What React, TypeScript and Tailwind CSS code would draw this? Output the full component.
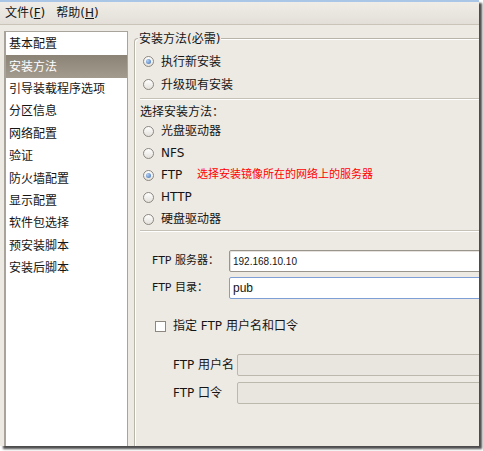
import type { ReactNode } from 'react';

const navItems = [
  '基本配置',
  '安装方法',
  '引导装载程序选项',
  '分区信息',
  '网络配置',
  '验证',
  '防火墙配置',
  '显示配置',
  '软件包选择',
  '预安装脚本',
  '安装后脚本',
];

function Radio({ checked }: { checked?: boolean }) {
  return (
    <span className="flex h-[11px] w-[11px] shrink-0 items-center justify-center rounded-full border border-[#8c877f] bg-linear-to-b from-white to-[#e4e1dc]">
      {checked && (
        <span className="h-[5px] w-[5px] rounded-full bg-[radial-gradient(circle_at_35%_35%,#b5d1f3,#3a6db5)]" />
      )}
    </span>
  );
}

function RadioRow({ checked, children, h = 'h-[22px]' }: { checked?: boolean; children: ReactNode; h?: string }) {
  return (
    <div className={`flex ${h} items-center gap-[7px] pl-[8px]`}>
      <Radio checked={checked} />
      {children}
    </div>
  );
}

function Separator() {
  return <div className="ml-[5px] border-t border-[#c6c1b7] shadow-[0_1px_0_#ffffff]" />;
}

export default function App() {
  return (
    <div className="h-[451px] w-[483px] overflow-hidden bg-white font-['DejaVu_Sans','Noto_Sans_CJK_SC',sans-serif] text-[12px] text-[#151515]">
      <div className="flex h-[446px] w-[479px] flex-col bg-[#edeae4] shadow-[3px_3px_2px_rgba(0,0,0,0.7)]">
        <div className="h-[2px] bg-[#aac6e6]" />

        {/* menu bar */}
        <div className="flex h-[23px] items-center gap-[11px] border-b border-[#c9c3b8] bg-linear-to-b from-[#f0ede8] to-[#e3dfd8] pl-[5px]">
          <span>
            文件(<span className="underline">F</span>)
          </span>
          <span>
            帮助(<span className="underline">H</span>)
          </span>
        </div>

        <div className="flex min-h-0 flex-1 overflow-hidden pl-[4px] pt-[6px]">
          {/* sidebar list */}
          <div className="w-[124px] shrink-0 border border-b-0 border-[#a9a49b] border-l-[2px] bg-white pt-[1px]">
            {navItems.map((item) => (
              <div
                key={item}
                className={`flex h-[22.4px] items-center pl-[3px] ${
                  item === '安装方法' ? 'bg-linear-to-b from-[#8b8376] to-[#a39b8e] text-white' : ''
                }`}
              >
                {item}
              </div>
            ))}
          </div>

          {/* right panel */}
          <div className="relative ml-[6px] mt-[7px] w-[380px] shrink-0 rounded-tl-[4px] border-l border-t border-[#b9b4aa] shadow-[inset_1px_1px_0_#ffffff]">
            <span className="absolute -top-[8px] left-[3px] bg-[#edeae4] px-[1px] leading-[16px]">安装方法(必需)</span>

            <div className="flex flex-col pt-[11px]">
              <RadioRow checked h="h-[23px]">执行新安装</RadioRow>
              <RadioRow h="h-[23px]">升级现有安装</RadioRow>
              <div className="mt-[2px]">
                <Separator />
              </div>
              <div className="flex h-[21px] items-center pl-[5px] pt-[4px]">选择安装方法：</div>
              <RadioRow>光盘驱动器</RadioRow>
              <RadioRow>NFS</RadioRow>
              <RadioRow checked>
                <span className="w-[29px]">FTP</span>
                <span className="text-[11px] text-[#ff0000]">选择安装镜像所在的网络上的服务器</span>
              </RadioRow>
              <RadioRow>HTTP</RadioRow>
              <RadioRow>硬盘驱动器</RadioRow>
              <Separator />

              <div className="mt-[19px] flex flex-col gap-[5px] pl-[17px]">
                <div className="flex items-center">
                  <span className="w-[77px] text-[11px]">FTP 服务器：</span>
                  <div className="flex h-[22px] w-[280px] items-center rounded-[2px] border border-[#9a958c] bg-white pl-[3px] font-['Liberation_Sans',sans-serif] text-[10px] shadow-[inset_1px_1px_0_#e6e3de]">
                    192.168.10.10
                  </div>
                </div>
                <div className="flex items-center">
                  <span className="w-[77px] text-[11px]">FTP 目录：</span>
                  <div className="flex h-[22px] w-[280px] items-center rounded-[2px] border border-[#7d9fd6] bg-white pl-[3px] font-['Liberation_Sans',sans-serif] text-[12px]">
                    pub
                  </div>
                </div>
              </div>

              <div className="mt-[17px] flex h-[20px] items-center gap-[7px] pl-[20px]">
                <span className="h-[11px] w-[11px] border border-[#8c877f] bg-white" />
                <span>指定 FTP 用户名和口令</span>
              </div>

              <div className="mt-[18px] flex flex-col gap-[6px] pl-[38px]">
                <div className="flex items-center">
                  <span className="w-[65px]">FTP 用户名</span>
                  <div className="h-[22px] w-[280px] rounded-[2px] border border-[#bdb8ae] bg-[#e9e6e0]" />
                </div>
                <div className="flex items-center">
                  <span className="w-[65px]">FTP 口令</span>
                  <div className="h-[22px] w-[280px] rounded-[2px] border border-[#bdb8ae] bg-[#e9e6e0]" />
                </div>
              </div>
            </div>
          </div>
        </div>
      </div>
    </div>
  );
}
